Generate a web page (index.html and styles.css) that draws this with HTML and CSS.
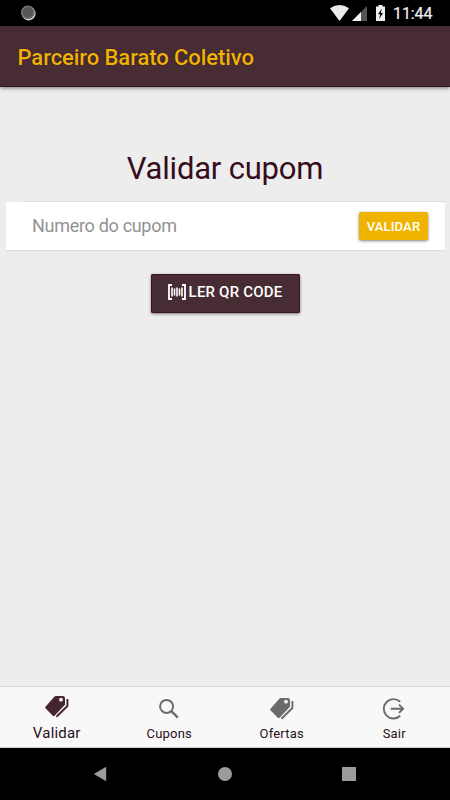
FILE: index.html
```html
<!DOCTYPE html>
<html lang="pt-BR">
<head>
<meta charset="utf-8">
<title>Parceiro Barato Coletivo</title>
<link rel="stylesheet" href="styles.css">
</head>
<body>
<svg width="0" height="0" class="defs">
  <symbol id="tags" viewBox="0 0 24 24">
    <path fill="currentColor" fill-rule="evenodd" d="M10.8 1H17.8Q20 1 20 3.2V9.8L9.8 20.4Q8.6 21.6 7.5 20.5L.7 13.6Q-.4 12.5 .7 11.4L9.3 1.8Q10 1 10.8 1ZM16 2.8a1.9 1.9 0 1 0 0 3.8a1.9 1.9 0 1 0 0-3.8Z"/>
    <path fill="none" stroke="currentColor" stroke-width="1.9" d="M22.4 4V11L11.5 21.7"/>
  </symbol>
</svg>
<div class="statusbar">
  <svg class="sync" width="16" height="16" viewBox="0 0 16 16"><circle cx="8.6" cy="8.4" r="7" fill="#e6e6e6"/><circle cx="7.9" cy="7.4" r="6.9" fill="#555"/><circle cx="7.9" cy="7.4" r="6" fill="none" stroke="#999" stroke-width="1.4" stroke-dasharray="1 1"/></svg>
  <svg class="system" width="56" height="18" viewBox="0 0 56 18">
    <path fill="#ececec" d="M0 4.2Q9.5-2.4 19 4.2L9.5 17Z"/>
    <path fill="#555" d="M37 2V17H22Z"/><path fill="#f3f3f3" d="M31 8V17H22Z"/>
    <path fill="#f0f0f0" d="M48.5 1H52.5V2.5H55V17H46V2.5H48.5Z"/>
    <path fill="#000" d="M51.8 4.5L48 10.2H50.2L49.2 15L53 9H50.8Z"/>
  </svg>
  <span class="clock">11:44</span>
</div>
<header class="appbar"><h1>Parceiro Barato Coletivo</h1></header>
<main>
  <h2><span>Validar cupom</span></h2>
  <div class="field"><span class="placeholder">Numero do cupom</span><button class="validate">VALIDAR</button></div>
  <button class="scan">
    <svg width="18" height="16" viewBox="0 0 18 16" fill="none" stroke="#fff"><path stroke-width="1.8" d="M4 1H1V15H4M14 1H17V15H14"/><path stroke-width="1.6" d="M4 3.5V12.5M6.5 4.5V11.5M9 3.5V12.5M11.5 4.5V11.5M14 3.5V12.5"/></svg>
    <span>LER QR CODE</span>
  </button>
</main>
<nav class="tabs">
  <div class="tab active"><svg width="24" height="24"><use href="#tags"/></svg><span>Validar</span></div>
  <div class="tab"><svg width="24" height="24" viewBox="0 0 24 24" fill="none" stroke="currentColor"><circle cx="9.6" cy="9.4" r="6.5" stroke-width="2"/><path stroke-width="2.4" d="M14.1 13.9L20.8 20.6"/></svg><span>Cupons</span></div>
  <div class="tab"><svg width="24" height="24"><use href="#tags"/></svg><span>Ofertas</span></div>
  <div class="tab"><svg width="24" height="24" viewBox="0 0 24 24" fill="none" stroke="currentColor" stroke-width="1.9"><path d="M18.2 4.8A9.7 9.7 0 1 0 18.2 18.8"/><path d="M8.7 11.7H21M17 7.6L21.1 11.7L17 15.8"/></svg><span>Sair</span></div>
</nav>
<div class="navbar">
  <svg width="14" height="16" viewBox="0 0 14 16"><path d="M13.2.8V15.2L.8 8Z"/></svg>
  <svg width="14" height="16" viewBox="0 0 14 16"><circle cx="7" cy="8" r="7"/></svg>
  <svg width="14" height="16" viewBox="0 0 14 16"><path d="M0 1H14V15H0Z"/></svg>
</div>
</body>
</html>
```
FILE: styles.css
```css
* { box-sizing: border-box; }
body { margin: 0; width: 450px; height: 800px; display: flex; flex-direction: column; overflow: hidden; background: #ededed; font-family: Roboto, sans-serif; }
svg { display: block; flex: none; }
.defs { position: absolute; }
button { border: 0; padding: 0; font-family: inherit; color: #fff; }
.statusbar { height: 26px; flex: none; background: #000; color: #f0f0f0; display: flex; align-items: flex-start; padding: 5px 17px 0 20px; }
.system { margin-left: auto; margin-right: 7px; margin-top: -1px; }
.clock { font-size: 16px; line-height: 17px; font-weight: 400; width: 40px; white-space: nowrap; letter-spacing: -.1px; -webkit-text-stroke: .2px #f0f0f0; }
.appbar { height: 61px; flex: none; background: #482c34; border-bottom: 1px solid #3a1022; box-shadow: 0 1px 4px rgba(0,0,0,.5); padding: 18px 17.5px 0; }
h1 { margin: 0; color: #f0b400; font-size: 22px; line-height: 28px; font-weight: 500; letter-spacing: -.07px; text-shadow: 0 0 1px #210036; white-space: nowrap; }
main { flex: 1; padding: 61px 5px 0; display: flex; flex-direction: column; align-items: center; }
h2 { margin: 0 0 13px; font-size: 31px; line-height: 41px; font-weight: 400; letter-spacing: -.2px; color: #350d1d; }
.field { width: 439px; margin-left: 1px; height: 48px; background: #fff; box-shadow: 0 1px 1px #dedede; display: flex; align-items: center; justify-content: space-between; padding: 0 17px 0 26px; position: relative; }
.field::before { content: ""; position: absolute; left: 17px; right: 0; top: -1px; height: 1px; background: #dadada; }
.placeholder { font-size: 18px; letter-spacing: -.3px; color: #929292; padding-bottom: 2px; }
.validate { width: 69px; height: 28px; border-radius: 2px; background: #f0b400; font-size: 13px; letter-spacing: .15px; font-weight: 500; box-shadow: 0 1px 3px rgba(0,0,0,.5); }
.scan { margin-top: 24px; width: 149px; height: 39px; border-radius: 2px; background: #482c34; box-shadow: inset 0 0 0 1px #3e1527, 0 1px 3px rgba(0,0,0,.5); display: flex; align-items: center; justify-content: center; gap: 3px; padding-bottom: 3px; font-size: 15px; line-height: 18px; font-weight: 500; letter-spacing: .2px; }
.tabs { height: 62px; flex: none; background: #f8f8f8; border-top: 1px solid #dadada; border-bottom: 1px solid #cfcfcf; display: flex; color: #6b6b6b; }
.tab { flex: 1; display: flex; flex-direction: column; align-items: center; padding: 10px 0 0 1px; }
.tab span { margin-top: 5px; font-size: 13px; line-height: 15px; letter-spacing: .2px; color: #291019; }
.tab.active { padding-top: 8px; color: #452530; }
.tab.active span { font-size: 15px; line-height: 17px; margin-top: 6px; }
.navbar { height: 52px; flex: none; background: #000; fill: #9b9b9b; display: flex; justify-content: space-between; align-items: center; padding: 0 94px 0 93px; }
```
